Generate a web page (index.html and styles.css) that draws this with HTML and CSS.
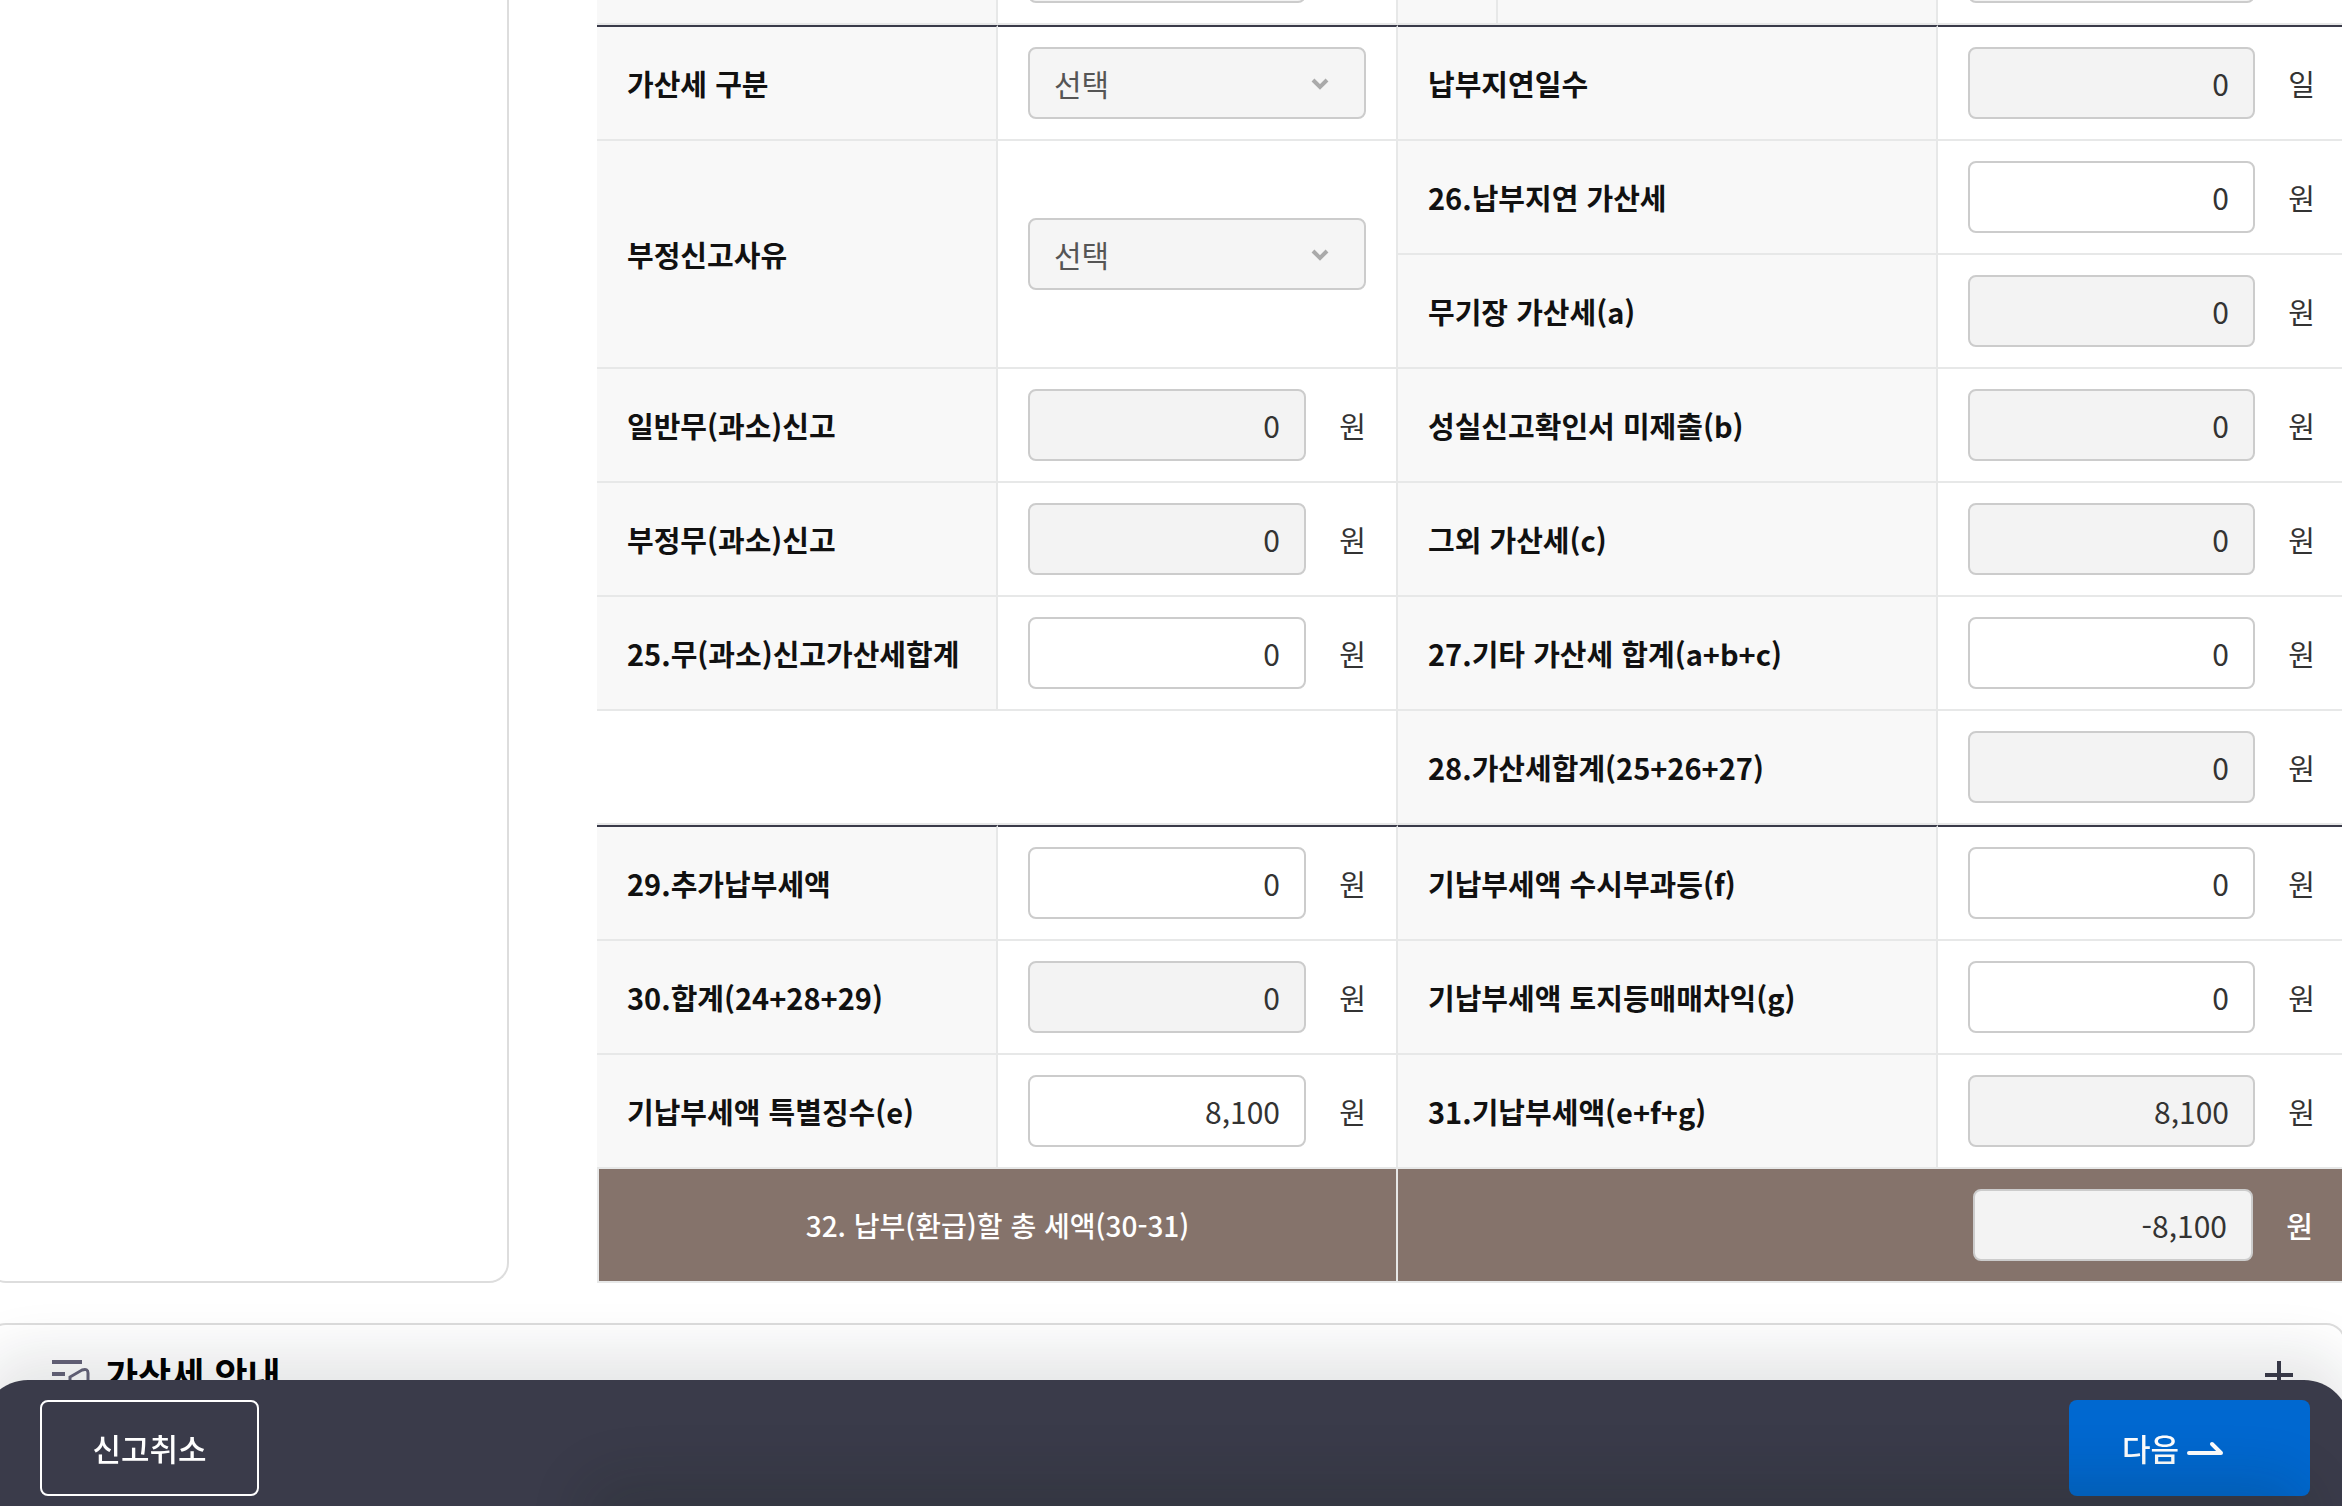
FILE: index.html
```html
<!DOCTYPE html>
<html lang="ko">
<head>
<meta charset="utf-8">
<meta name="viewport" content="width=device-width, initial-scale=1">
<title>가산세 신고</title>
<link rel="stylesheet" href="styles.css">
</head>
<body>
<main class="page">
  <div class="columns">
    <aside class="side-panel"></aside>
    <table class="tax-table">
      <colgroup>
        <col class="col-label"><col class="col-value"><col class="col-group"><col class="col-sublabel"><col>
      </colgroup>
      <tbody>
        <tr>
          <th></th>
          <td><div class="field"><input type="text" readonly aria-label="세액"><span class="unit"></span></div></td>
          <th></th>
          <th></th>
          <td><div class="field"><input type="text" readonly aria-label="감면세액"><span class="unit"></span></div></td>
        </tr>
        <tr class="section-start">
          <th><label for="f-type">가산세 구분</label></th>
          <td><div class="select-wrap"><select id="f-type"><option>선택</option></select><svg class="chevron" viewBox="0 0 20 14"><path d="M3 3l7 7 7-7"/></svg></div></td>
          <th colspan="2"><label for="f-days">납부지연일수</label></th>
          <td><div class="field"><input id="f-days" type="text" value="0" readonly><span class="unit">일</span></div></td>
        </tr>
        <tr>
          <th rowspan="2"><label for="f-reason">부정신고사유</label></th>
          <td rowspan="2"><div class="select-wrap"><select id="f-reason"><option>선택</option></select><svg class="chevron" viewBox="0 0 20 14"><path d="M3 3l7 7 7-7"/></svg></div></td>
          <th colspan="2"><label for="f-26">26.납부지연 가산세</label></th>
          <td><div class="field"><input id="f-26" type="text" value="0"><span class="unit">원</span></div></td>
        </tr>
        <tr>
          <th colspan="2"><label for="f-a">무기장 가산세(a)</label></th>
          <td><div class="field"><input id="f-a" type="text" value="0" readonly><span class="unit">원</span></div></td>
        </tr>
        <tr>
          <th><label for="f-general">일반무(과소)신고</label></th>
          <td><div class="field"><input id="f-general" type="text" value="0" readonly><span class="unit">원</span></div></td>
          <th colspan="2"><label for="f-b">성실신고확인서 미제출(b)</label></th>
          <td><div class="field"><input id="f-b" type="text" value="0" readonly><span class="unit">원</span></div></td>
        </tr>
        <tr>
          <th><label for="f-unfair">부정무(과소)신고</label></th>
          <td><div class="field"><input id="f-unfair" type="text" value="0" readonly><span class="unit">원</span></div></td>
          <th colspan="2"><label for="f-c">그외 가산세(c)</label></th>
          <td><div class="field"><input id="f-c" type="text" value="0" readonly><span class="unit">원</span></div></td>
        </tr>
        <tr>
          <th><label for="f-25">25.무(과소)신고가산세합계</label></th>
          <td><div class="field"><input id="f-25" type="text" value="0"><span class="unit">원</span></div></td>
          <th colspan="2"><label for="f-27">27.기타 가산세 합계(a+b+c)</label></th>
          <td><div class="field"><input id="f-27" type="text" value="0"><span class="unit">원</span></div></td>
        </tr>
        <tr>
          <td colspan="2"></td>
          <th colspan="2"><label for="f-28">28.가산세합계(25+26+27)</label></th>
          <td><div class="field"><input id="f-28" type="text" value="0" readonly><span class="unit">원</span></div></td>
        </tr>
        <tr class="section-start">
          <th><label for="f-29">29.추가납부세액</label></th>
          <td><div class="field"><input id="f-29" type="text" value="0"><span class="unit">원</span></div></td>
          <th colspan="2"><label for="f-f">기납부세액 수시부과등(f)</label></th>
          <td><div class="field"><input id="f-f" type="text" value="0"><span class="unit">원</span></div></td>
        </tr>
        <tr>
          <th><label for="f-30">30.합계(24+28+29)</label></th>
          <td><div class="field"><input id="f-30" type="text" value="0" readonly><span class="unit">원</span></div></td>
          <th colspan="2"><label for="f-g">기납부세액 토지등매매차익(g)</label></th>
          <td><div class="field"><input id="f-g" type="text" value="0"><span class="unit">원</span></div></td>
        </tr>
        <tr>
          <th><label for="f-e">기납부세액 특별징수(e)</label></th>
          <td><div class="field"><input id="f-e" type="text" value="8,100"><span class="unit">원</span></div></td>
          <th colspan="2"><label for="f-31">31.기납부세액(e+f+g)</label></th>
          <td><div class="field"><input id="f-31" type="text" value="8,100" readonly><span class="unit">원</span></div></td>
        </tr>
        <tr class="total">
          <th colspan="2"><label for="f-32">32. 납부(환급)할 총 세액(30-31)</label></th>
          <td colspan="3"><div class="field"><input id="f-32" type="text" value="-8,100" readonly><span class="unit">원</span></div></td>
        </tr>
      </tbody>
    </table>
  </div>
  <section class="guide">
    <h2 class="guide-title">
      <svg class="guide-icon" viewBox="0 0 40 40"><path d="M2 9h30M2 21h13M2 34h10"/><path class="pen" d="M20 36V24l12-7q6-2 6 3v16z"/></svg>
      가산세 안내
    </h2>
    <button class="guide-toggle" type="button" aria-label="펼치기"><svg viewBox="0 0 30 30"><path d="M15 1v28M1 15h28"/></svg></button>
  </section>
</main>
<footer class="action-bar">
  <button class="btn btn-cancel" type="button">신고취소</button>
  <button class="btn btn-next" type="button">다음<svg class="arrow" viewBox="0 0 38 16"><path d="M3 13h32L26 4"/></svg></button>
</footer>
</body>
</html>
```
FILE: styles.css
```css
* { box-sizing: border-box; }

body {
  margin: 0;
  overflow: hidden;
  background: #fff;
  color: #111;
  font-family: "Noto Sans CJK KR", "Noto Sans", sans-serif;
  font-size: 29px;
  line-height: 44px;
}

input, select, button { font: inherit; }

/* The view is scrolled part-way down the form. */
.page { margin: -89px -4px 0 -14px; }

.columns {
  display: grid;
  grid-template-columns: 523px 1fr;
  column-gap: 88px;
}

.side-panel {
  border: 2px solid #ddd;
  border-top: 0;
  border-radius: 0 0 20px 20px;
}

.tax-table {
  width: 100%;
  table-layout: fixed;
  border-spacing: 0;
}
.col-label { width: 401px; }
.col-value { width: 400px; }
.col-group { width: 100px; }
.col-sublabel { width: 440px; }

.tax-table th,
.tax-table td {
  height: 114px;
  padding: 20px 30px;
  border-right: 2px solid #e7e8e8;
  border-bottom: 2px solid #e7e8e8;
  text-align: left;
}
.tax-table th {
  background: #f8f8f8;
  font-weight: 700;
  white-space: nowrap;
}
.tax-table td:last-child {
  padding-right: 31px;
  border-right: 0;
}
.section-start th,
.section-start td {
  border-top: 2px solid #3a3b4a;
}
.tax-table .section-start th,
.tax-table .section-start td { height: 116px; }

.field {
  display: flex;
  align-items: center;
  gap: 32px;
}
.field input {
  flex: 1;
  min-width: 0;
  height: 72px;
  padding: 0 24px;
  border: 2px solid #ccc;
  border-radius: 8px;
  background: #fff;
  color: #333;
  font-size: 30px;
  text-align: right;
}
.field input:read-only { background: #f3f3f3; }
.unit {
  width: 28px;
  color: #333;
  text-align: right;
}

.select-wrap { position: relative; }
.select-wrap select {
  display: block;
  width: 100%;
  height: 72px;
  padding: 0 24px;
  border: 2px solid #ccc;
  border-radius: 8px;
  background: #f5f5f5;
  color: #555;
  font-size: 30px;
  appearance: none;
}
.chevron {
  position: absolute;
  top: 30px;
  right: 36px;
  width: 20px;
  height: 14px;
  fill: none;
  stroke: #aaa;
  stroke-width: 4;
}

.tax-table .total th,
.tax-table .total td {
  background: #85736b;
  color: #fff;
}
.tax-table .total th {
  border-left: 2px solid #e7e8e8;
  font-size: 28px;
  font-weight: 500;
  text-align: center;
}
.tax-table .total td { padding-right: 33px; }
.total .field { justify-content: flex-end; }
.total .field input { flex: 0 0 280px; }
.total .unit { color: #fff; font-weight: 500; }

.guide {
  display: flex;
  justify-content: space-between;
  align-items: flex-start;
  margin-top: 40px;
  padding: 18px 50px 60px 62px;
  border: 2px solid #ddd;
  border-radius: 20px;
}
.guide-title {
  display: flex;
  align-items: center;
  gap: 15px;
  margin: 0;
  color: #000;
  font-size: 36px;
  line-height: 60px;
}
.guide-icon {
  width: 40px;
  height: 40px;
  fill: none;
  stroke: #66647a;
  stroke-width: 4;
}
.guide-icon .pen { stroke-width: 3; }
.guide-toggle {
  padding: 17px 0;
  border: 0;
  background: none;
}
.guide-toggle svg {
  display: block;
  width: 30px;
  height: 30px;
  stroke: #3a3b4a;
  stroke-width: 4;
}

.action-bar {
  position: fixed;
  right: -8px;
  bottom: 0;
  left: -18px;
  display: flex;
  justify-content: space-between;
  padding: 20px 40px 10px 58px;
  border-radius: 46px 46px 0 0;
  background: #3a3b4a;
  box-shadow: 0 -28px 56px rgba(20, 30, 40, .11);
}
/* Soft shade rising from the lower edge of the bar. */
.action-bar::after {
  content: "";
  position: absolute;
  top: 100%;
  right: 40px;
  left: 600px;
  height: 80px;
  border-radius: 46px;
  box-shadow: 0 -28px 56px rgba(20, 30, 20, .16);
  pointer-events: none;
}
.btn {
  display: flex;
  align-items: center;
  justify-content: center;
  height: 96px;
  border-radius: 8px;
  color: #fff;
  font-size: 31px;
  font-weight: 500;
}
.btn-cancel {
  width: 219px;
  border: 2px solid #fff;
  background: none;
}
.btn-next {
  gap: 7px;
  padding: 0 86px 0 53px;
  border: 0;
  background: #0068d0;
}
.arrow {
  width: 38px;
  height: 16px;
  fill: none;
  stroke: #fff;
  stroke-width: 4;
  stroke-linecap: round;
  stroke-linejoin: round;
}
```
